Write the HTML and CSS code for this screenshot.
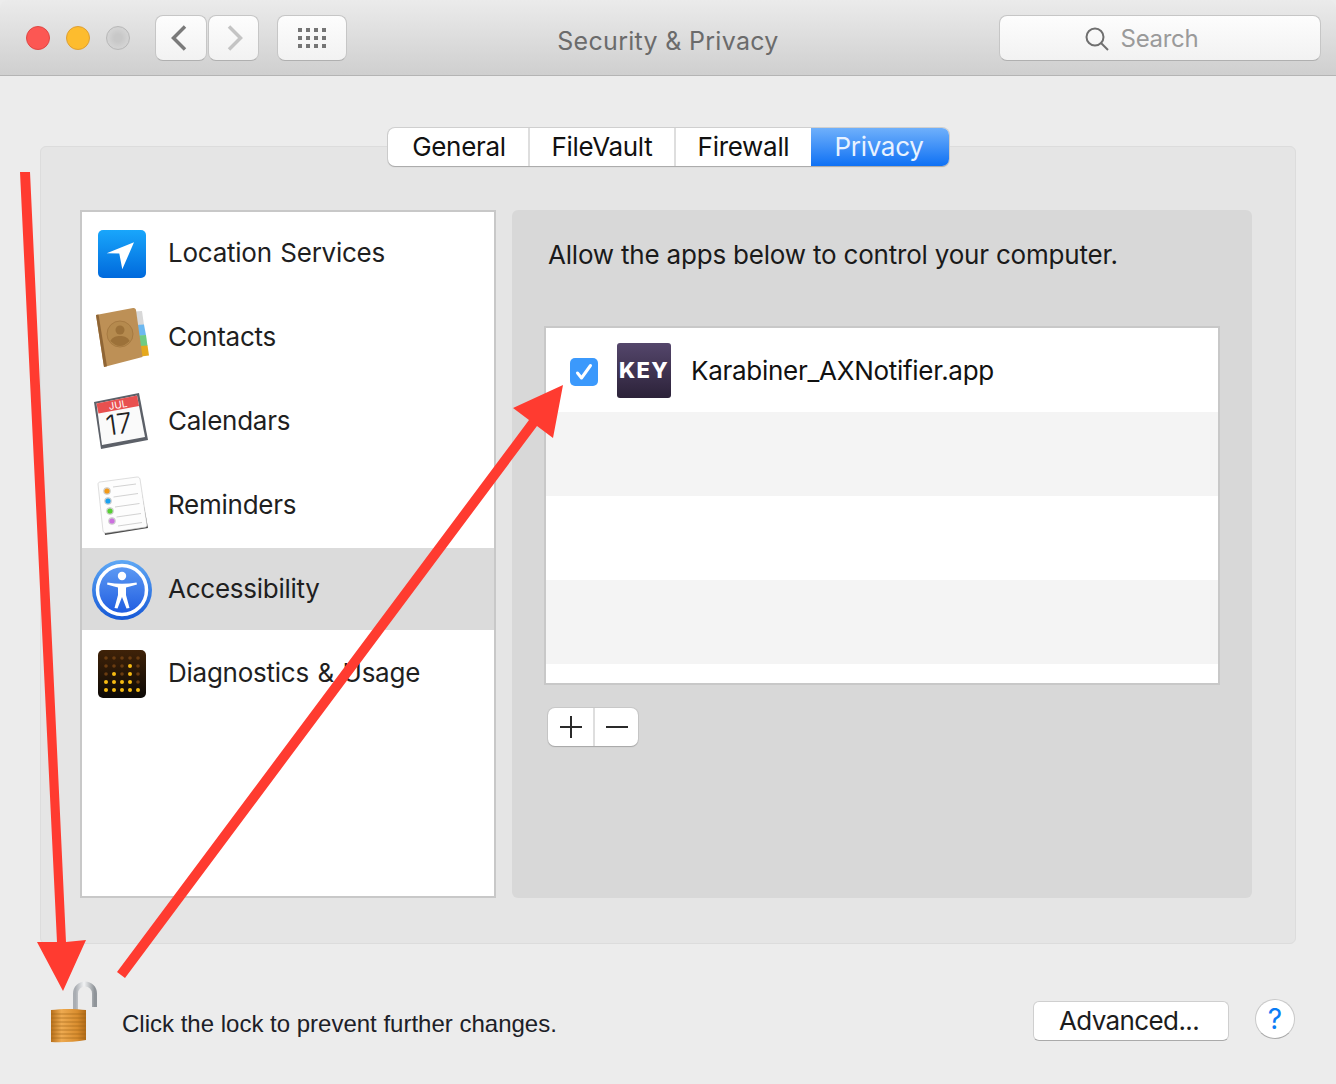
FILE: index.html
```html
<!DOCTYPE html>
<html lang="en">
<head>
<meta charset="utf-8">
<title>Security &amp; Privacy</title>
<link rel="stylesheet" href="styles.css">
</head>
<body>
<div class="window">
  <header class="titlebar">
    <div class="lights">
      <span class="light red"></span>
      <span class="light yellow"></span>
      <span class="light grey"></span>
    </div>
    <div class="nav">
      <button class="tool nav-btn back"><svg width="16" height="26" viewBox="0 0 16 26"><path d="M14 1.500 2.500 13 14 24.500" class="chev dark"/></svg></button>
      <button class="tool nav-btn forward"><svg width="16" height="26" viewBox="0 0 16 26"><path d="M2 1.500 13.500 13 2 24.500" class="chev light-chev"/></svg></button>
    </div>
    <button class="tool grid-btn">
      <svg width="30" height="22" viewBox="0 0 30 22" class="grid-svg">
        <rect x="1" y="1" width="4" height="4"/><rect x="9" y="1" width="4" height="4"/><rect x="17" y="1" width="4" height="4"/><rect x="25" y="1" width="4" height="4"/>
        <rect x="1" y="9" width="4" height="4"/><rect x="9" y="9" width="4" height="4"/><rect x="17" y="9" width="4" height="4"/><rect x="25" y="9" width="4" height="4"/>
        <rect x="1" y="17" width="4" height="4"/><rect x="9" y="17" width="4" height="4"/><rect x="17" y="17" width="4" height="4"/><rect x="25" y="17" width="4" height="4"/>
      </svg>
    </button>
    <h1 class="title">Security &amp; Privacy</h1>
    <div class="tool search">
      <svg width="24" height="24" viewBox="0 0 24 24"><circle cx="10" cy="10" r="8.500" class="glass"/><path d="M16 16l7 7" class="glass"/></svg>
      <span class="search-text">Search</span>
    </div>
  </header>

  <main class="panel">
    <nav class="tabs">
      <span class="tab tab-general">General</span>
      <span class="tab tab-filevault">FileVault</span>
      <span class="tab tab-firewall">Firewall</span>
      <span class="tab tab-privacy">Privacy</span>
    </nav>
    <div class="columns">
      <ul class="services">
        <li class="service">
          <span class="icon">
            <svg width="60" height="60" viewBox="0 0 60 60">
              <defs><linearGradient id="locG" x1="0" y1="0" x2="0" y2="1"><stop offset="0" stop-color="#19a6fb"/><stop offset="1" stop-color="#0069dc"/></linearGradient></defs>
              <rect x="6" y="6" width="48" height="48" rx="5" fill="url(#locG)"/>
              <path d="M42 18.300 14.700 29.300 27.300 29.500 30.300 45.300z" fill="#fff"/>
            </svg>
          </span>
          <span class="label">Location Services</span>
        </li>
        <li class="service">
          <span class="icon">
            <svg width="60" height="60" viewBox="0 0 60 60">
              <path d="M42 3.500 50 3 52 17 44 17.500z" fill="#d8d8d8"/>
              <path d="M44 17 52 16.500 54 27.500 46 28z" fill="#6cb8f0"/>
              <path d="M46 27.500 54 27 55.500 38 48 38.500z" fill="#6fcb82"/>
              <path d="M48 38 55.500 37.500 57 47.500 49 48.500z" fill="#e5a81c"/>
              <path d="M4 7 41 0c1.500 0 2.500 .5 3 2L50.500 49 12 59z" fill="#bd9056"/>
              <path d="M4 7 6.500 6.500 15 58.300 12 59z" fill="#8f6535"/>
              <circle cx="28" cy="26" r="13" fill="#b58a4e" stroke="#a67a42" stroke-width="1"/>
              <circle cx="28" cy="22" r="4.500" fill="#9c7139"/>
              <path d="M18.300 33c2-4 6-5 9.700-5s7.700 1 9.700 5c-3 3-6.500 5-9.700 5s-6.700-2-9.700-5z" fill="#9c7139"/>
            </svg>
          </span>
          <span class="label">Contacts</span>
        </li>
        <li class="service">
          <span class="icon">
            <svg width="60" height="60" viewBox="0 0 60 60">
              <path d="M2 10 47 1 56 48 9 57z" fill="#5c6068"/>
              <path d="M4.500 11.500 45 3.500 53 45 10 53z" fill="#fafafa"/>
              <path d="M4.500 11.500 45 3.500 47 14 6.500 21.500z" fill="#e8504f"/>
              <text x="26" y="16.500" transform="rotate(-10 26 13)" class="cal-month">JUL</text>
              <text x="27" y="42" transform="rotate(-8 27 32)" class="cal-day">17</text>
            </svg>
          </span>
          <span class="label">Calendars</span>
        </li>
        <li class="service">
          <span class="icon">
            <svg width="60" height="60" viewBox="0 0 60 60">
              <path d="M7 8 47 3 56 52 13 59z" fill="#4c4c4c"/>
              <path d="M8 6 45 1c1.500 0 2.500 .5 3 2L55 49c0 1.200-.5 2-2 2.200L14 57c-1.500 0-2.500-.5-3-2L6 8c0-1 1-2 2-2z" fill="#fdfdfd" stroke="#c8c8c8" stroke-width=".6"/>
              <path d="M21 11 44 8M21.500 21 46 17.500M23 31 47.500 27.500M24.500 41 49 37.500M26 50 50 46.500" stroke="#c6c6c6" stroke-width=".8" fill="none"/>
              <circle cx="15" cy="15" r="3.200" fill="#f39a18" stroke="#cfcfcf" stroke-width="1.200"/>
              <circle cx="16" cy="25" r="3.200" fill="#19a1f0" stroke="#cfcfcf" stroke-width="1.200"/>
              <circle cx="18" cy="35" r="3.200" fill="#57cf33" stroke="#cfcfcf" stroke-width="1.200"/>
              <circle cx="20" cy="45" r="3.200" fill="#cc6fdf" stroke="#cfcfcf" stroke-width="1.200"/>
            </svg>
          </span>
          <span class="label">Reminders</span>
        </li>
        <li class="service selected">
          <span class="icon">
            <svg width="60" height="60" viewBox="0 0 60 60">
              <defs>
                <linearGradient id="accG" x1="0" y1="0" x2="0" y2="1"><stop offset="0" stop-color="#5f9cf4"/><stop offset="1" stop-color="#1e5be0"/></linearGradient>
                <linearGradient id="accO" x1="0" y1="0" x2="0" y2="1"><stop offset="0" stop-color="#5ea8f5"/><stop offset="1" stop-color="#1658d6"/></linearGradient>
              </defs>
              <circle cx="30" cy="30" r="30" fill="url(#accO)"/>
              <circle cx="30" cy="30" r="24.500" fill="url(#accG)" stroke="#fff" stroke-width="3.500"/>
              <circle cx="30" cy="16" r="4.200" fill="#fff"/>
              <path d="M15.500 22.500Q30 25 44.500 22.500L45 24.500Q38 26.500 34 27.500L34 35 37.500 48 34.500 48.500 30 37 25.500 48.500 22.500 48 26 35 26 27.500Q22 26.500 15 24.500z" fill="#fff"/>
            </svg>
          </span>
          <span class="label">Accessibility</span>
        </li>
        <li class="service">
          <span class="icon">
            <svg width="60" height="60" viewBox="0 0 60 60">
              <defs><linearGradient id="diaG" x1="0" y1="0" x2="0" y2="1"><stop offset="0" stop-color="#3f2208"/><stop offset="1" stop-color="#0c0906"/></linearGradient></defs>
              <rect x="6" y="6" width="48" height="48" rx="5" fill="url(#diaG)"/>
              <g class="dots-dim">
                <circle cx="14" cy="14" r="1.800"/><circle cx="22" cy="14" r="1.800"/><circle cx="30" cy="14" r="1.800"/><circle cx="38" cy="14" r="1.800"/><circle cx="46" cy="14" r="1.800"/>
                <circle cx="14" cy="22" r="1.800"/><circle cx="22" cy="22" r="1.800"/><circle cx="30" cy="22" r="1.800"/><circle cx="46" cy="22" r="1.800"/>
                <circle cx="14" cy="30" r="1.800"/><circle cx="30" cy="30" r="1.800"/><circle cx="46" cy="30" r="1.800"/>
                <circle cx="46" cy="38" r="1.800"/>
              </g>
              <g class="dots-lit">
                <circle cx="38" cy="22" r="2"/>
                <circle cx="22" cy="30" r="2"/><circle cx="38" cy="30" r="2"/>
                <circle cx="14" cy="38" r="2"/><circle cx="22" cy="38" r="2"/><circle cx="30" cy="38" r="2"/><circle cx="38" cy="38" r="2"/>
                <circle cx="14" cy="46" r="2"/><circle cx="22" cy="46" r="2"/><circle cx="30" cy="46" r="2"/><circle cx="38" cy="46" r="2"/><circle cx="46" cy="46" r="2"/>
              </g>
            </svg>
          </span>
          <span class="label">Diagnostics &amp; Usage</span>
        </li>
      </ul>

      <section class="detail">
        <p class="prompt">Allow the apps below to control your computer.</p>
        <div class="apps">
          <div class="app-row">
            <span class="check"><svg width="18" height="18" viewBox="0 0 18 18"><path d="M2.500 10l4 5L15.500 2.500" class="tick"/></svg></span>
            <span class="key-icon">KEY</span>
            <span class="app-name">Karabiner_AXNotifier.app</span>
          </div>
          <div class="app-row alt"></div>
          <div class="app-row"></div>
          <div class="app-row alt"></div>
          <div class="app-tail"></div>
        </div>
        <div class="plus-minus">
          <span class="pm pm-plus"><svg width="24" height="24" viewBox="0 0 24 24"><path d="M1 12h22M12 1v22" class="pm-line"/></svg></span>
          <span class="pm pm-minus"><svg width="24" height="24" viewBox="0 0 24 24"><path d="M1 12h22" class="pm-line"/></svg></span>
        </div>
      </section>
    </div>
  </main>

  <footer class="footer">
    <svg class="lock" width="50" height="64" viewBox="0 0 50 64">
      <defs>
        <linearGradient id="shackle" x1="0" y1="0" x2="1" y2="0"><stop offset="0" stop-color="#a9adb2"/><stop offset=".45" stop-color="#f2f3f4"/><stop offset="1" stop-color="#8f9499"/></linearGradient>
        <linearGradient id="body" x1="0" y1="0" x2="1" y2="0"><stop offset="0" stop-color="#b8701c"/><stop offset=".3" stop-color="#eeaa50"/><stop offset=".75" stop-color="#d98d2e"/><stop offset="1" stop-color="#b06a18"/></linearGradient>
      </defs>
      <path d="M25.500 31V13.500a9.500 9.500 0 0 1 19 0V27" fill="none" stroke="url(#shackle)" stroke-width="5"/>
      <path d="M1 30c10-1.500 25-1.500 35 0v30c-11 2-24 2.500-35 2z" fill="url(#body)"/>
      <path d="M1 34h35M1 38h35M1 42h35M1 46h35M1 50h35M1 54h35M1 58h35" stroke="#9e6418" stroke-width="1" opacity=".6"/>
    </svg>
    <span class="lock-text">Click the lock to prevent further changes.</span>
    <button class="advanced">Advanced...</button>
    <span class="help">?</span>
  </footer>
</div>

<svg class="annotations" width="1336" height="1084" viewBox="0 0 1336 1084">
  <path d="M20 172h10L66 942l20-2-23 51-26-49 20 0z" class="arrow"/>
  <path d="M117 972 529 420 513 408 563 385 553 438 537 426 125 978z" class="arrow"/>
</svg>
</body>
</html>
```
FILE: styles.css
```css
* { box-sizing: border-box; }
html, body { margin: 0; padding: 0; }
body {
  width: 1336px;
  height: 1084px;
  background: #ececec;
  font-family: "Inter", "Liberation Sans", sans-serif;
  color: #1c1c1c;
  overflow: hidden;
  position: relative;
}
.window { width: 1336px; height: 1084px; display: flex; flex-direction: column; }

/* title bar */
.titlebar {
  height: 76px;
  flex: none;
  display: flex;
  align-items: flex-start;
  padding: 15px 15px 0 26px;
  position: relative;
  border-radius: 8px 8px 0 0;
  background: linear-gradient(#ebebeb, #cfcfcf);
  border-bottom: 1px solid #b4b4b4;
}
.lights { display: flex; gap: 16px; margin-top: 11px; margin-right: 26px; }
.light { width: 24px; height: 24px; border-radius: 50%; border: 1px solid; }
.red { background: #fc5753; border-color: #df4744; }
.yellow { background: #fdbc2e; border-color: #de9f34; }
.grey { background: radial-gradient(circle, #c8c8c8 0 25%, #d2d2d2 60%); border-color: #b8b8b8; }
.tool {
  padding: 0;
  height: 46px;
  border: 1px solid #c6c6c6;
  border-bottom-color: #b0b0b0;
  border-radius: 8px;
  background: linear-gradient(#fdfdfd, #f2f2f2);
  display: flex;
  align-items: center;
  justify-content: center;
}
.nav { display: flex; gap: 1px; margin-right: 18px; margin-left: -1px; }
.nav-btn { width: 51px; }
.back { width: 52px; padding-right: 5px; }
.forward { padding-left: 3px; }
.chev { fill: none; stroke-width: 3.500; }
.dark { stroke: #7a7a7a; }
.light-chev { stroke: #c4c4c4; }
.grid-btn { width: 70px; }
.grid-svg { fill: #757575; }
.title {
  margin: 10px 0 0;
  text-align: center;
  font-size: 25px;
  line-height: 32px;
  font-weight: 400;
  letter-spacing: .3px;
  color: #6b6b6b;
  position: absolute;
  left: 0;
  right: 0;
  pointer-events: none;
}
.search {
  margin-left: auto;
  width: 322px;
  gap: 12px;
  padding-right: 37px;
  color: #9a9a9a;
  font-size: 24px;
  letter-spacing: -.3px;
}
.search svg { margin-top: 2px; }
.glass { fill: none; stroke: #6f6f6f; stroke-width: 2; }

/* panel */
.panel {
  margin: 70px 40px 0;
  height: 798px;
  flex: none;
  border: 1px solid #dcdcdc;
  border-radius: 6px;
  background: #e5e5e5;
}
.tabs {
  display: flex;
  width: 561px;
  height: 38px;
  margin: -19px 0 0 347px;
  border-radius: 7px;
  background: #fff;
  box-shadow: 0 1px 1px #a8a8a8, 0 0 0 1px #cfcfcf;
  font-size: 26px;
  letter-spacing: -.3px;
  overflow: hidden;
}
.tab {
  display: flex;
  align-items: center;
  justify-content: center;
  padding-bottom: 1px;
  color: #111;
  border-right: 2px solid #dedede;
}
.tab-general { width: 142px; padding-left: 2px; }
.tab-filevault { width: 146px; }
.tab-firewall { width: 135px; border-right: 0; }
.tab-privacy { width: 138px; padding-right: 2px; border-right: 0; color: #e8f2ff; background: linear-gradient(#6fb0fb, #0f71f4); }
.columns { display: flex; gap: 16px; margin: 44px 43px 0 39px; }

.services {
  list-style: none;
  margin: 0;
  padding: 0;
  width: 416px;
  height: 688px;
  background: #fff;
  border: 2px solid #c8c8c8;
  display: flex;
  flex-direction: column;
  gap: 2px;
}
.service {
  height: 82px;
  flex: none;
  display: flex;
  align-items: center;
  gap: 16px;
  padding-left: 10px;
  font-size: 26px;
  letter-spacing: -.25px;
  word-spacing: 1.500px;
  color: #1f1f1f;
}
.service.selected { background: #dbdbdb; }
.icon { width: 60px; height: 60px; display: block; flex: none; margin-top: 2px; }
.icon svg { display: block; overflow: visible; }
.label { margin-bottom: 2px; }
.cal-month { font: 10px "Inter", sans-serif; fill: #fff; text-anchor: middle; letter-spacing: 0; }
.cal-day { font: 300 28px "Inter", sans-serif; fill: #222; text-anchor: middle; letter-spacing: 0; }
.dots-dim { fill: #6a3c10; }
.dots-lit { fill: #f6bb12; }

.detail {
  width: 740px;
  height: 688px;
  background: #d8d8d8;
  border-radius: 6px;
  padding: 29px 33px 0 32px;
}
.prompt {
  margin: 0 0 0 4px;
  font-size: 26px;
  line-height: 32px;
  letter-spacing: -.2px;
  color: #1a1a1a;
}
.apps {
  margin-top: 55px;
  width: 676px;
  height: 359px;
  background: #fff;
  border: 2px solid #c8c8c8;
}
.app-row {
  height: 84px;
  display: flex;
  align-items: center;
  padding-left: 24px;
  background: #fff;
}
.alt { background: #f4f4f4; }
.app-tail { height: 19px; }
.check {
  width: 28px;
  height: 28px;
  border-radius: 5px;
  background: #3b99fc;
  display: flex;
  align-items: center;
  justify-content: center;
  margin-top: 3px;
  margin-right: 19px;
}
.tick { fill: none; stroke: #fff; stroke-width: 3; stroke-linecap: round; stroke-linejoin: round; }
.key-icon {
  width: 54px;
  height: 55px;
  margin-right: 20px;
  border-radius: 3px;
  background: linear-gradient(#54466b, #2c2239);
  color: #fff;
  font-size: 22px;
  font-weight: 800;
  letter-spacing: 1.300px;
  display: flex;
  align-items: center;
  justify-content: center;
}
.app-name { font-size: 26px; letter-spacing: -.28px; color: #111; }
.plus-minus {
  display: flex;
  margin: 23px 0 0 4px;
  width: 90px;
  height: 38px;
  background: #fff;
  border-radius: 7px;
  box-shadow: 0 1px 1px #a8a8a8, 0 0 0 1px #c8c8c8;
}
.pm {
  display: flex;
  align-items: center;
  justify-content: center;
}
.pm-plus { width: 47px; border-right: 2px solid #dedede; }
.pm-minus { width: 43px; }
.pm-line { fill: none; stroke: #2a2a2a; stroke-width: 2; }

/* footer */
.footer {
  flex: 1;
  display: flex;
  align-items: flex-start;
  padding: 36px 41px 0 50px;
  position: relative;
}
.lock { flex: none; margin-right: 22px; }
.lock-text {
  margin-top: 30px;
  font-family: "Liberation Sans", Arial, sans-serif;
  font-size: 24px;
  color: #1c2027;
}
.advanced {
  margin-left: auto;
  margin-top: 21px;
  width: 196px;
  height: 40px;
  padding: 0 4px 2px 0;
  background: #fff;
  border: 1px solid #cfcfcf;
  border-bottom-color: #aaa;
  border-radius: 6px;
  font-family: "Inter", sans-serif;
  font-size: 26px;
  letter-spacing: -.6px;
  color: #1c1c1c;
}
.help {
  margin-left: 26px;
  margin-top: 19px;
  width: 40px;
  height: 40px;
  border-radius: 50%;
  background: #fff;
  border: 1px solid #c8c8c8;
  border-bottom-color: #aaa;
  color: #0a7cf5;
  font-size: 28px;
  font-weight: 400;
  display: flex;
  align-items: center;
  justify-content: center;
}

/* red annotation arrows drawn over the screenshot */
.annotations { position: absolute; left: 0; top: 0; pointer-events: none; }
.arrow { fill: #ff3b30; }
```
